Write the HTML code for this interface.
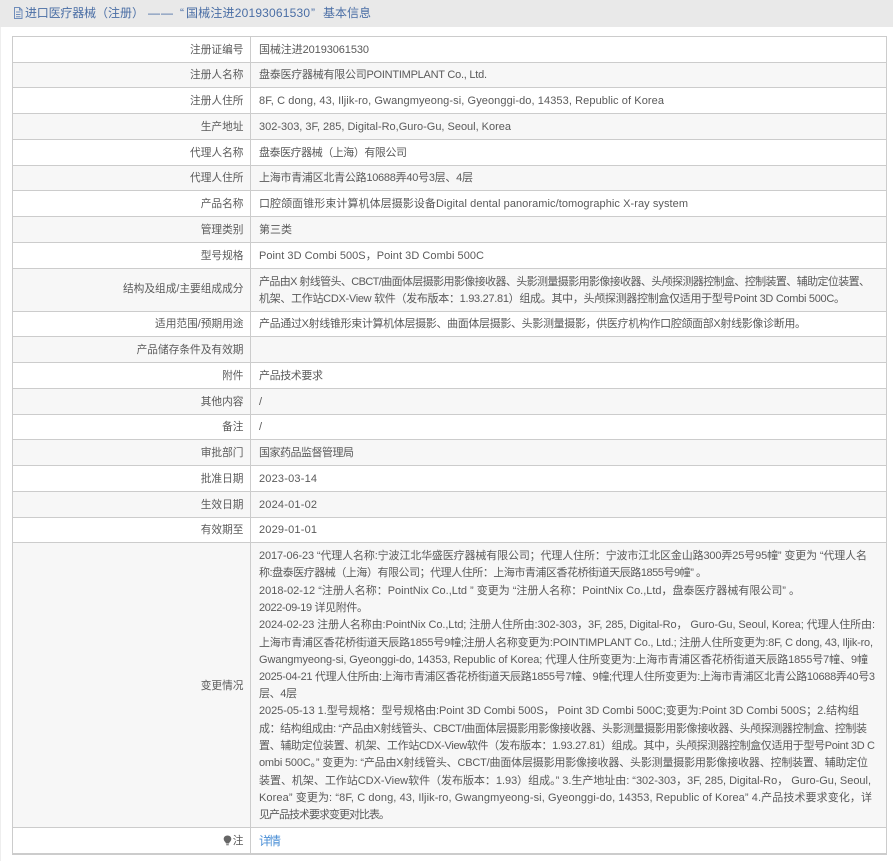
<!DOCTYPE html>
<html lang="zh-CN">
<head>
<meta charset="utf-8">
<title>基本信息</title>
<style>
html,body{margin:0;padding:0;background:#fff;width:893px;height:861px;overflow:hidden}
svg{display:block}
text{font-family:"Liberation Sans","Noto Sans CJK SC",sans-serif;font-size:11px;fill:#5a5a5a}
.l{text-anchor:end;font-size:10.7px}
.h{font-size:12px;fill:#4a6ea5}
.a{font-size:12px;fill:#4b8fd6}
</style>
</head>
<body>
<svg width="893" height="861" viewBox="0 0 893 861" xmlns="http://www.w3.org/2000/svg">
<rect x="0" y="0" width="893" height="27" fill="#e9e9e9"/>
<rect x="0" y="27" width="1" height="834" fill="#eee"/>
<g fill="#f7f7f7">
<rect x="13" y="62" width="873" height="25"/>
<rect x="13" y="113" width="873" height="26"/>
<rect x="13" y="165" width="873" height="25"/>
<rect x="13" y="216" width="873" height="26"/>
<rect x="13" y="268" width="873" height="43"/>
<rect x="13" y="336" width="873" height="26"/>
<rect x="13" y="388" width="873" height="26"/>
<rect x="13" y="439" width="873" height="26"/>
<rect x="13" y="491" width="873" height="26"/>
<rect x="13" y="542" width="873" height="285"/>
</g>
<g fill="#ccc">
<rect x="12" y="36" width="875" height="1"/>
<rect x="12" y="62" width="875" height="1"/>
<rect x="12" y="87" width="875" height="1"/>
<rect x="12" y="113" width="875" height="1"/>
<rect x="12" y="139" width="875" height="1"/>
<rect x="12" y="165" width="875" height="1"/>
<rect x="12" y="190" width="875" height="1"/>
<rect x="12" y="216" width="875" height="1"/>
<rect x="12" y="242" width="875" height="1"/>
<rect x="12" y="268" width="875" height="1"/>
<rect x="12" y="311" width="875" height="1"/>
<rect x="12" y="336" width="875" height="1"/>
<rect x="12" y="362" width="875" height="1"/>
<rect x="12" y="388" width="875" height="1"/>
<rect x="12" y="414" width="875" height="1"/>
<rect x="12" y="439" width="875" height="1"/>
<rect x="12" y="465" width="875" height="1"/>
<rect x="12" y="491" width="875" height="1"/>
<rect x="12" y="517" width="875" height="1"/>
<rect x="12" y="542" width="875" height="1"/>
<rect x="12" y="827" width="875" height="1"/>
<rect x="12" y="853" width="875" height="2"/>
<rect x="12" y="36" width="1" height="819"/>
<rect x="886" y="36" width="1" height="819"/>
<rect x="250" y="36" width="1" height="817"/>
</g>

<path d="M14.500 7.500h5l2.500 2.500v8.500h-7.500z M19.500 7.500v2.500h2.500 M16 12h4.500 M16 14.500h4.500 M16 16.800h4.500" fill="none" stroke="#6f8dbb" stroke-width="1"/>
<text class="h" x="25" y="17" textLength="71">进口医疗器械</text>
<text class="h" x="96" y="17" textLength="48">（注册）</text>
<text class="h" x="148" y="17" textLength="25">——</text>
<text class="h" x="180" y="17">“</text>
<text class="h" x="186" y="17" textLength="124">国械注进20193061530</text>
<text class="h" x="311" y="17">”</text>
<text class="h" x="323" y="17" textLength="48">基本信息</text>

<text class="l" x="243.500" y="53">注册证编号</text>
<text class="l" x="243.500" y="78">注册人名称</text>
<text class="l" x="243.500" y="104">注册人住所</text>
<text class="l" x="243.500" y="130">生产地址</text>
<text class="l" x="243.500" y="156">代理人名称</text>
<text class="l" x="243.500" y="181">代理人住所</text>
<text class="l" x="243.500" y="207">产品名称</text>
<text class="l" x="243.500" y="233">管理类别</text>
<text class="l" x="243.500" y="259">型号规格</text>
<text class="l" x="243.500" y="292">结构及组成/主要组成成分</text>
<text class="l" x="243.500" y="327">适用范围/预期用途</text>
<text class="l" x="243.500" y="353">产品储存条件及有效期</text>
<text class="l" x="243.500" y="379">附件</text>
<text class="l" x="243.500" y="405">其他内容</text>
<text class="l" x="243.500" y="430">备注</text>
<text class="l" x="243.500" y="456">审批部门</text>
<text class="l" x="243.500" y="482">批准日期</text>
<text class="l" x="243.500" y="508">生效日期</text>
<text class="l" x="243.500" y="533">有效期至</text>
<text class="l" x="243.500" y="689">变更情况</text>
<text class="l" x="243.500" y="844">注</text>
<path d="M227.500 835.500c-2.300 0-3.800 1.600-3.800 3.500 0 1.500 1 2.400 1.700 3.300l.6 1.200h3l.6-1.200c.7-.9 1.700-1.800 1.700-3.300 0-1.900-1.500-3.500-3.800-3.500z M226.200 844.300h2.600v.9h-2.600z" fill="#666"/>

<text x="259" y="53" textLength="110">国械注进20193061530</text>
<text x="259" y="78" textLength="228">盘泰医疗器械有限公司POINTIMPLANT Co., Ltd.</text>
<text x="259" y="104" textLength="405">8F, C dong, 43, Iljik-ro, Gwangmyeong-si, Gyeonggi-do, 14353, Republic of Korea</text>
<text x="259" y="130" textLength="252">302-303, 3F, 285, Digital-Ro,Guro-Gu, Seoul, Korea</text>
<text x="259" y="156" textLength="148">盘泰医疗器械（上海）有限公司</text>
<text x="259" y="181" textLength="214">上海市青浦区北青公路10688弄40号3层、4层</text>
<text x="259" y="207" textLength="429">口腔颌面锥形束计算机体层摄影设备Digital dental panoramic/tomographic X-ray system</text>
<text x="259" y="233" textLength="33">第三类</text>
<text x="259" y="259" textLength="225">Point 3D Combi 500S，Point 3D Combi 500C</text>
<text x="259" y="285" textLength="611">产品由X 射线管头、CBCT/曲面体层摄影用影像接收器、头影测量摄影用影像接收器、头颅探测器控制盒、控制装置、辅助定位装置、</text>
<text x="259" y="302" textLength="586">机架、工作站CDX-View 软件（发布版本：1.93.27.81）组成。其中，头颅探测器控制盒仅适用于型号Point 3D Combi 500C。</text>
<text x="259" y="327" textLength="547">产品通过X射线锥形束计算机体层摄影、曲面体层摄影、头影测量摄影，供医疗机构作口腔颌面部X射线影像诊断用。</text>
<text x="259" y="379" textLength="64">产品技术要求</text>
<text x="259" y="405">/</text>
<text x="259" y="430">/</text>
<text x="259" y="456" textLength="95">国家药品监督管理局</text>
<text x="259" y="482" textLength="58">2023-03-14</text>
<text x="259" y="508" textLength="58">2024-01-02</text>
<text x="259" y="533" textLength="58">2029-01-01</text>

<text x="259" y="559" textLength="608">2017-06-23 “代理人名称:宁波江北华盛医疗器械有限公司；代理人住所：宁波市江北区金山路300弄25号95幢” 变更为 “代理人名</text>
<text x="259" y="576" textLength="448">称:盘泰医疗器械（上海）有限公司；代理人住所：上海市青浦区香花桥街道天辰路1855号9幢” 。</text>
<text x="259" y="594" textLength="541">2018-02-12 “注册人名称：PointNix Co.,Ltd ” 变更为 “注册人名称：PointNix Co.,Ltd，盘泰医疗器械有限公司” 。</text>
<text x="259" y="611" textLength="109">2022-09-19 详见附件。</text>
<text x="259" y="628" textLength="616">2024-02-23 注册人名称由:PointNix Co.,Ltd; 注册人住所由:302-303，3F, 285, Digital-Ro， Guro-Gu, Seoul, Korea; 代理人住所由:</text>
<text x="259" y="646" textLength="614">上海市青浦区香花桥街道天辰路1855号9幢;注册人名称变更为:POINTIMPLANT Co., Ltd.; 注册人住所变更为:8F, C dong, 43, Iljik-ro,</text>
<text x="259" y="663" textLength="609">Gwangmyeong-si, Gyeonggi-do, 14353, Republic of Korea; 代理人住所变更为:上海市青浦区香花桥街道天辰路1855号7幢、9幢</text>
<text x="259" y="680" textLength="616">2025-04-21 代理人住所由:上海市青浦区香花桥街道天辰路1855号7幢、9幢;代理人住所变更为:上海市青浦区北青公路10688弄40号3</text>
<text x="259" y="697" textLength="38">层、4层</text>
<text x="259" y="714" textLength="600">2025-05-13 1.型号规格：型号规格由:Point 3D Combi 500S， Point 3D Combi 500C;变更为:Point 3D Combi 500S；2.结构组</text>
<text x="259" y="732" textLength="608">成：结构组成由: “产品由X射线管头、CBCT/曲面体层摄影用影像接收器、头影测量摄影用影像接收器、头颅探测器控制盒、控制装</text>
<text x="259" y="749" textLength="616">置、辅助定位装置、机架、工作站CDX-View软件（发布版本：1.93.27.81）组成。其中，头颅探测器控制盒仅适用于型号Point 3D C</text>
<text x="259" y="766" textLength="609">ombi 500C。” 变更为: “产品由X射线管头、CBCT/曲面体层摄影用影像接收器、头影测量摄影用影像接收器、控制装置、辅助定位</text>
<text x="259" y="784" textLength="612">装置、机架、工作站CDX-View软件（发布版本：1.93）组成。” 3.生产地址由: “302-303，3F, 285, Digital-Ro， Guro-Gu, Seoul,</text>
<text x="259" y="801" textLength="613">Korea” 变更为: “8F, C dong, 43, Iljik-ro, Gwangmyeong-si, Gyeonggi-do, 14353, Republic of Korea” 4.产品技术要求变化，详</text>
<text x="259" y="818" textLength="131">见产品技术要求变更对比表。</text>

<text class="a" x="259" y="845" textLength="22">详情</text>
</svg>
</body>
</html>
